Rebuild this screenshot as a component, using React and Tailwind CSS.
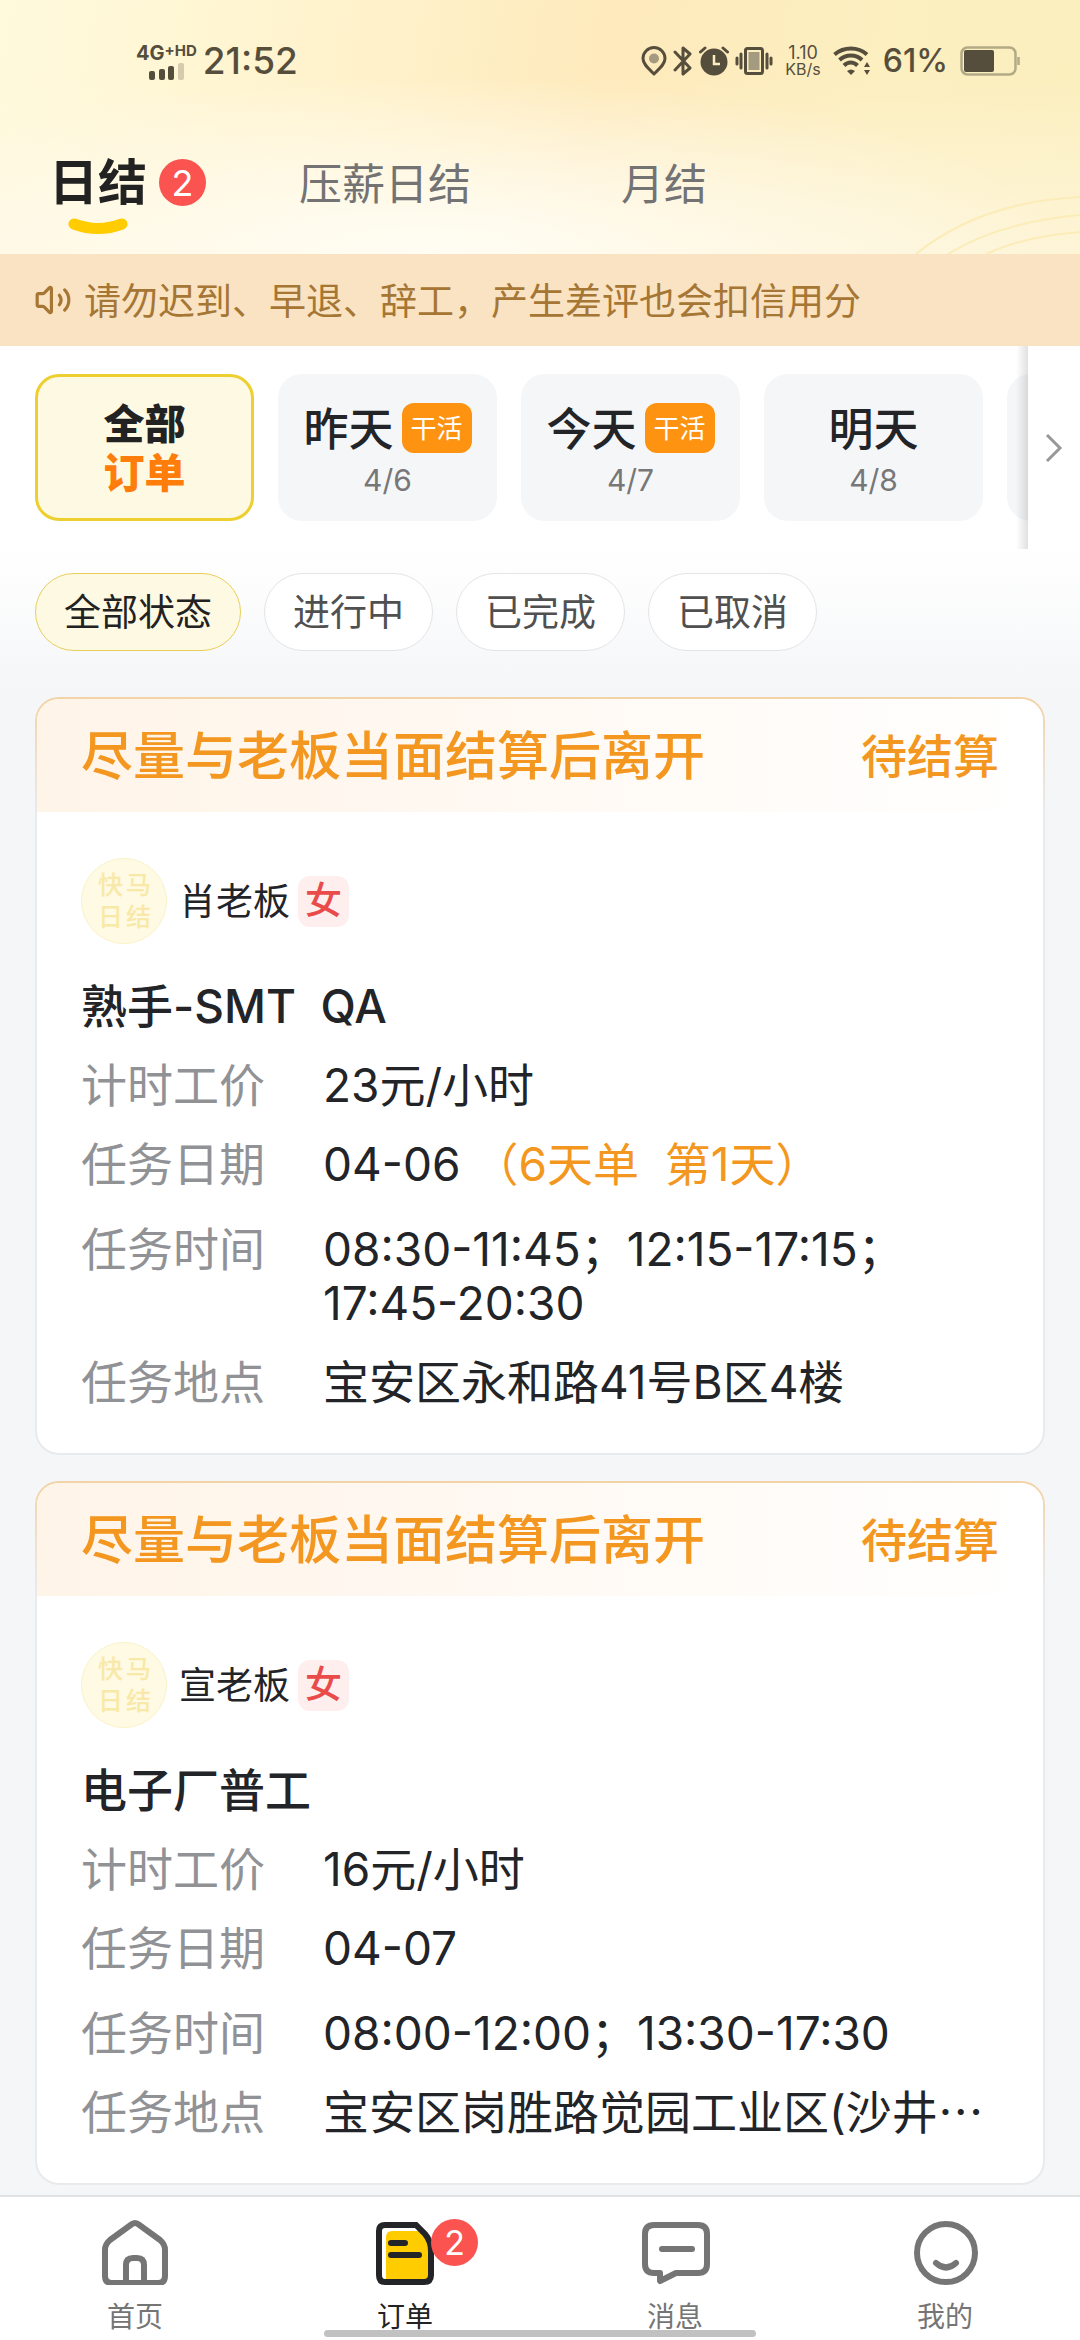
import { Volume2 } from "lucide-react";

const tabs = [
  { label: "日结", badge: 2, active: true },
  { label: "压薪日结" },
  { label: "月结" },
];

const days = [
  { label: "昨天", date: "4/6", busy: true },
  { label: "今天", date: "4/7", busy: true },
  { label: "明天", date: "4/8" },
];

const statuses = ["全部状态", "进行中", "已完成", "已取消"];

const orders = [
  {
    boss: "肖老板",
    title: "熟手-SMT\u00a0\u00a0QA",
    pay: "23元/小时",
    date: "04-06",
    note: "（6天单\u00a0\u00a0第1天）",
    time: "08:30-11:45；12:15-17:15；17:45-20:30",
    place: "宝安区永和路41号B区4楼",
  },
  {
    boss: "宣老板",
    title: "电子厂普工",
    pay: "16元/小时",
    date: "04-07",
    time: "08:00-12:00；13:30-17:30",
    place: "宝安区岗胜路觉园工业区(沙井",
    clipped: true,
  },
];

function SignalIcon() {
  return (
    <svg width="35" height="17" viewBox="0 0 35 17" fill="#564e3c">
      <rect x="0" y="8" width="6" height="9" rx="2" />
      <rect x="10" y="6" width="6" height="11" rx="2" />
      <rect x="19" y="3" width="6" height="14" rx="2" />
      <rect x="29" y="0" width="6" height="17" rx="2" opacity="0.25" />
    </svg>
  );
}

function PinIcon() {
  return (
    <svg width="26" height="30" viewBox="0 0 26 30" fill="none">
      <path
        d="M13 28C7 22 2 18 2 12.500A11 11 0 0 1 24 12.500C24 18 19 22 13 28Z"
        stroke="#564e3c"
        strokeWidth="3"
        strokeLinejoin="round"
      />
      <circle cx="13" cy="12.500" r="5" fill="#a39a80" />
    </svg>
  );
}

function BluetoothIcon() {
  return (
    <svg width="20" height="30" viewBox="0 0 20 30" fill="none">
      <path
        d="M2 6L17 22L10 28V2L17 8L2 24"
        stroke="#564e3c"
        strokeWidth="3"
        strokeLinecap="round"
        strokeLinejoin="round"
      />
    </svg>
  );
}

function AlarmIcon() {
  return (
    <svg width="30" height="30" viewBox="0 0 30 30" fill="none">
      <circle cx="15" cy="16" r="13.500" fill="#564e3c" />
      <path d="M1.500 6L6 2M28.500 6L24 2" stroke="#564e3c" strokeWidth="3" strokeLinecap="round" />
      <path d="M15 9v9h6" stroke="#fdeec0" strokeWidth="2.500" />
    </svg>
  );
}

function VibrateIcon() {
  return (
    <svg width="38" height="30" viewBox="0 0 38 30" fill="none" stroke="#564e3c">
      <rect x="10.500" y="2.500" width="17" height="25" rx="2" strokeWidth="3" />
      <rect x="13.500" y="6" width="11" height="18" fill="#a39a80" stroke="none" />
      <path d="M6 8v14M32 8v14M2 12v6M36 12v6" strokeWidth="3" strokeLinecap="round" />
    </svg>
  );
}

function WifiIcon() {
  return (
    <svg width="38" height="30" viewBox="0 0 38 30" fill="none" stroke="#564e3c">
      <path d="M1.500 8.500C11 0.500 25 0.500 34 8.500" strokeWidth="4" />
      <path d="M6.500 14C13 8 23 8 29 14" strokeWidth="4" />
      <path d="M11 19.500C15 15.500 20.500 15.500 24.500 19.500" strokeWidth="4" />
      <path d="M14 25Q18 22 22 25L18 29Z" fill="#564e3c" stroke="none" />
      <path d="M31 21L34 16L37 21ZM31 24L34 29L37 24Z" fill="#564e3c" stroke="none" />
    </svg>
  );
}

function BatteryIcon() {
  return (
    <svg width="60" height="30" viewBox="0 0 60 30" fill="none">
      <rect x="1.500" y="1.500" width="54" height="27" rx="6" stroke="#b3aa86" strokeWidth="2.500" />
      <rect x="4" y="4" width="30" height="22" rx="2" fill="#564e3c" />
      <path d="M58.500 11v8" stroke="#b3aa86" strokeWidth="2.500" />
    </svg>
  );
}

function HomeIcon() {
  return (
    <svg width="68" height="68" viewBox="0 0 68 68" fill="none" stroke="#757575" strokeWidth="6">
      <path d="M31 7Q34 5 37 7L59 23Q64 27 64 33V59Q64 66 57 66H11Q4 66 4 59V33Q4 27 9 23Z" />
      <path d="M25 66V48Q25 41 32 41H36Q43 41 43 48V66" />
    </svg>
  );
}

function OrderIcon() {
  return (
    <svg width="68" height="68" viewBox="0 0 68 68" fill="none">
      <path d="M15 64V20Q15 14 21 14H50L58 22V64Z" fill="#fc0" />
      <path
        d="M14 8H45L54 17Q60 24 60 34V58Q60 65 53 65H14Q8 65 8 58V14Q8 8 14 8Z"
        stroke="#232427"
        strokeWidth="6"
      />
      <path d="M20 26H34M20 38H48" stroke="#232427" strokeWidth="6" strokeLinecap="round" />
    </svg>
  );
}

function MessageIcon() {
  return (
    <svg width="70" height="68" viewBox="0 0 70 68" fill="none" stroke="#757575" strokeWidth="6" strokeLinecap="round" strokeLinejoin="round">
      <path d="M14 8H58Q67 8 67 17V47Q67 56 58 56H36L20 64V56H14Q5 56 5 47V17Q5 8 14 8Z" />
      <path d="M22 32H52" />
    </svg>
  );
}

function ProfileIcon() {
  return (
    <svg width="68" height="68" viewBox="0 0 68 68" fill="none" stroke="#757575" strokeWidth="6" strokeLinecap="round">
      <circle cx="35" cy="36" r="29" />
      <path d="M25 46Q35 55 45 46" />
    </svg>
  );
}

const navItems = [
  { label: "首页", Icon: HomeIcon },
  { label: "订单", Icon: OrderIcon, badge: 2, active: true },
  { label: "消息", Icon: MessageIcon },
  { label: "我的", Icon: ProfileIcon },
];

function StatusBar() {
  return (
    <div className="flex items-center justify-between pt-10 pr-[60px] pl-[136px] text-[#564e3c]">
      <div className="flex items-center gap-1.5">
        <div className="flex flex-col items-center">
          <div className="flex items-start leading-none font-bold">
            <span className="text-[20px]">4G</span>
            <span className="text-[15px]">+HD</span>
          </div>
          <SignalIcon />
        </div>
        <span className="text-[37px] leading-[42px] font-medium">21:52</span>
      </div>
      <div className="flex items-center gap-3">
        <div className="flex items-center gap-1.5">
          <PinIcon />
          <BluetoothIcon />
          <AlarmIcon />
          <VibrateIcon />
        </div>
        <div className="flex flex-col items-center text-[16px] leading-4">
          <span className="text-[18px]">1.10</span>
          <span>KB/s</span>
        </div>
        <WifiIcon />
        <span className="text-[32px] leading-[42px] font-medium">61%</span>
        <BatteryIcon />
      </div>
    </div>
  );
}

function Tabs() {
  return (
    <nav className="flex items-start px-[49px] pt-[66px]">
      {tabs.map((tab) =>
        tab.active ? (
          <button key={tab.label} className="mr-[93px] flex items-start gap-3">
            <span className="flex flex-col items-center">
              <span className="text-[49px] leading-[70px] font-bold text-[#222]">{tab.label}</span>
              <svg width="60" height="18" viewBox="0 0 60 18" fill="none">
                <path d="M6 6Q30 15 54 6" stroke="#fc0" strokeWidth="11" strokeLinecap="round" />
              </svg>
            </span>
            <span className="mt-[11px] flex size-[47px] items-center justify-center rounded-full bg-[#fa5350] text-[36px] leading-none text-white">
              {tab.badge}
            </span>
          </button>
        ) : (
          <button key={tab.label} className="mr-[150px] text-[43px] leading-[72px] text-[#737373]">
            {tab.label}
          </button>
        )
      )}
    </nav>
  );
}

function Header() {
  return (
    <header className="relative h-[254px] overflow-hidden bg-[linear-gradient(100deg,#fffadd_0%,#fff3cd_30%,#feeabc_55%,#fcefc0_80%,#fbefbe_100%)]">
      <div className="absolute inset-0 bg-linear-to-b from-transparent from-30% to-[#fff7e2]/70" />
      <div className="absolute inset-0 bg-[radial-gradient(ellipse_60%_70%_at_40%_100%,#fffdf4_0%,#fffdf400_100%)]" />
      <svg className="absolute right-0 bottom-0" width="170" height="60" viewBox="0 0 170 60" fill="none" stroke="#fbecb8" strokeWidth="2">
        <path d="M6 60Q70 8 170 3M38 60Q90 28 170 21M76 60Q115 42 170 38" />
      </svg>
      <div className="relative">
        <StatusBar />
        <Tabs />
      </div>
    </header>
  );
}

function DayPicker() {
  return (
    <section className="flex h-[203px]">
      <div className="flex min-w-0 flex-1 items-center gap-6 overflow-hidden pl-[35px]">
        <button className="flex h-[147px] w-[219px] shrink-0 flex-col items-center justify-center rounded-3xl border-3 border-[#eecf30] bg-[#fef9e3] pt-0.5 text-[41px] leading-[49px] font-black">
          <span className="text-[#222]">全部</span>
          <span className="text-[#ff7d0a]">订单</span>
        </button>
        {days.map((day) => (
          <button key={day.label} className="flex h-[147px] w-[219px] shrink-0 flex-col items-center justify-center rounded-3xl bg-[#f5f6f8]">
            <span className="flex items-center gap-2">
              <span className="pt-1 text-[45px] leading-[60px] font-medium text-[#222427]">{day.label}</span>
              {day.busy && (
                <span className="flex h-[50px] w-[70px] items-center justify-center rounded-xl bg-[#fd9310] pt-0.5 text-[26px] text-white">
                  干活
                </span>
              )}
            </span>
            <span className="text-[30px] leading-10 text-[#777]">{day.date}</span>
          </button>
        ))}
        <div className="h-[147px] w-[219px] shrink-0 rounded-3xl bg-[#f5f6f8]" />
      </div>
      <button aria-label="更多日期" className="relative flex w-[52px] items-center justify-center bg-white">
        <span className="absolute inset-y-0 right-full w-3 bg-linear-to-r from-transparent to-black/12" />
        <svg width="18" height="30" viewBox="0 0 18 30" fill="none" stroke="#999" strokeWidth="3">
          <path d="M2 2L15 15L2 28" />
        </svg>
      </button>
    </section>
  );
}

function StatusFilter() {
  return (
    <section className="flex gap-[23px] bg-linear-to-b from-white to-[#f5f6f8] px-[35px] pt-6 pb-[46px]">
      {statuses.map((status, i) => (
        <button
          key={status}
          className={
            i === 0
              ? "rounded-full border border-[#e8cf5a] bg-[#fef9e3] px-7 pt-0.5 text-[37px] leading-[74px] text-[#222]"
              : "rounded-full border border-[#e3e4e6] bg-white px-7 pt-0.5 text-[37px] leading-[74px] text-[#505050]"
          }
        >
          {status}
        </button>
      ))}
    </section>
  );
}

function Row({ label, className = "", children }) {
  return (
    <div className={`flex ${className}`}>
      <dt className="w-[242px] shrink-0 text-[#919296]">{label}</dt>
      <dd className="min-w-0 flex-1 text-[#222427]">{children}</dd>
    </div>
  );
}

function OrderCard({ order }) {
  return (
    <article className="rounded-3xl bg-linear-to-b from-[#f2d3a6] to-[#e9eaec] to-15% p-0.5">
      <div className="overflow-hidden rounded-[22px] bg-white">
        <div className="flex h-[113px] items-center justify-between bg-linear-to-r from-[#fff4e8] to-white px-11 pt-0.5 font-medium text-[#f39720]">
          <h2 className="text-[52px]">尽量与老板当面结算后离开</h2>
          <span className="text-[46px]">待结算</span>
        </div>
        <div className="px-11 pt-[46px] pb-11">
          <div className="flex items-center">
            <div className="grid size-[86px] grid-cols-2 place-content-center gap-x-1 rounded-full border border-[#fbf2c8] bg-[#fffae3] px-4 text-center text-[25px] leading-8 font-medium text-[#f8e9a8]">
              <span>快</span>
              <span>马</span>
              <span>日</span>
              <span>结</span>
            </div>
            <span className="ml-3 pt-0.5 text-[37px] text-[#222427]">{order.boss}</span>
            <span className="ml-2 flex size-[51px] items-center justify-center rounded-xl bg-[#feeeee] text-[37px] font-medium text-[#e94b4b]">
              女
            </span>
          </div>
          <h3 className="mt-[35px] text-[46px] leading-[54px] font-medium text-[#222427]">{order.title}</h3>
          <dl className="mt-[25px] flex flex-col gap-[25px] text-[46px] leading-[54px]">
            <Row label="计时工价">{order.pay}</Row>
            <Row label="任务日期">
              {order.date}
              {order.note && <span className="ml-3 text-[#f39720]">{order.note}</span>}
            </Row>
            <Row label="任务时间" className="pt-1.5">
              {order.time}
            </Row>
            <Row label="任务地点">
              {order.place}
              {order.clipped && <span className="font-['Noto_Sans_CJK_SC',sans-serif] leading-none">…</span>}
            </Row>
          </dl>
        </div>
      </div>
    </article>
  );
}

function BottomNav() {
  return (
    <nav className="relative mt-auto grid grid-cols-4 border-t-2 border-[#e2e2e4] bg-white pt-5">
      {navItems.map(({ label, Icon, badge, active }) => (
        <a key={label} href="#" className="flex flex-col items-center">
          <span className="relative">
            <Icon />
            {badge && (
              <span className="absolute top-0.5 left-[60px] flex size-[47px] items-center justify-center rounded-full bg-[#fa5350] text-[34px] leading-none text-white">
                {badge}
              </span>
            )}
          </span>
          <span className={active ? "mt-2.5 text-[28px] leading-[45px] text-[#222]" : "mt-2.5 text-[28px] leading-[45px] text-[#757575]"}>
            {label}
          </span>
        </a>
      ))}
      <div className="absolute bottom-[3px] left-[30%] h-[7px] w-2/5 rounded-full bg-[#c1c1c1]" />
    </nav>
  );
}

export default function App() {
  return (
    <div className="flex min-h-screen flex-col bg-[#f5f6f8] font-[Inter,'Noto_Sans_CJK_SC',sans-serif]">
      <Header />
      <div className="flex h-[92px] items-center gap-3 bg-[#fae3c3] px-[34px] text-[37px] text-[#a57634]">
        <Volume2 size={38} strokeWidth={2} />
        <p className="pt-1">请勿迟到、早退、辞工，产生差评也会扣信用分</p>
      </div>
      <div className="bg-white">
        <DayPicker />
        <StatusFilter />
      </div>
      <main className="flex flex-col gap-[26px] px-[35px] pb-2">
        {orders.map((order) => (
          <OrderCard key={order.boss} order={order} />
        ))}
      </main>
      <BottomNav />
    </div>
  );
}
